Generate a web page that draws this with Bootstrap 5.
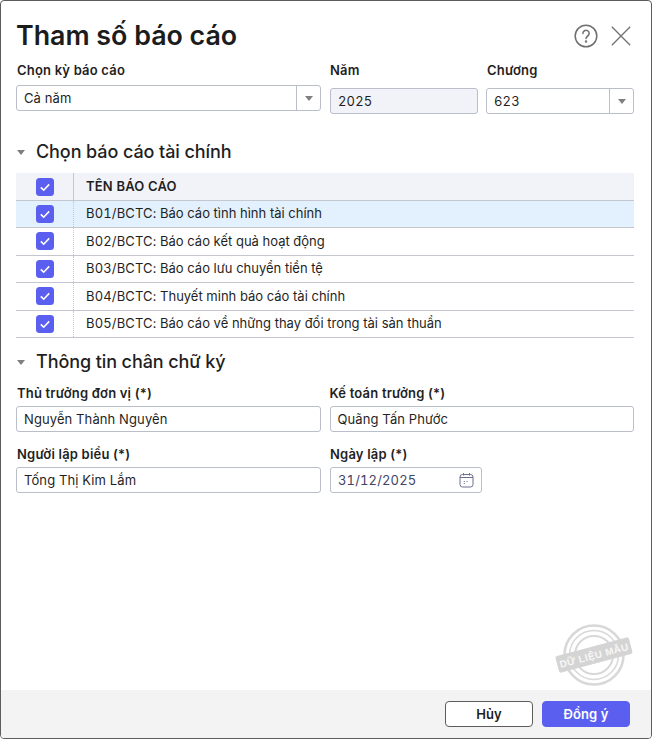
<!DOCTYPE html>
<html lang="vi">
<head>
<meta charset="utf-8">
<title>Tham số báo cáo</title>
<link href="https://cdn.jsdelivr.net/npm/bootstrap@5.3.0/dist/css/bootstrap.min.css" rel="stylesheet">
<style>
html,body{height:100%;margin:0;background:#fff}
body{font-family:Inter,"Noto Sans",sans-serif;font-size:13px;color:#1f1f1f;overflow:hidden}
.dlg{height:739px;width:652px;border:1px solid #5c5c5c;border-radius:4px;display:flex;flex-direction:column;position:relative;background:#fff}
.dlg-body{flex:1 1 auto;padding:0 17px 0 15px;min-height:0}
.dlg-head{height:60px;padding-top:1px}
.dlg-title{font-size:26.8px;font-weight:600;color:#1c1c1c;margin:0;line-height:66px}
.head-tools{margin-right:3px;margin-top:8px;gap:13px}
.ic-help{width:24px;height:24px;display:block}
.ic-close{width:20px;height:20px;display:block}
.fld-lbl{font-size:13px;font-weight:600;line-height:18px;margin:0 0 4px 1px;color:#1f1f1f;letter-spacing:.2px}
.lbl-r{margin-left:0}
.fld{height:26px;border:1px solid #babec9;border-radius:3px;font-size:13px;line-height:24px;padding:0 7px;background:#fff;display:flex;align-items:center;letter-spacing:.1px}
.fld-dis{background:#f2f3f8}
.fld-val{flex:1 1 auto}
.num{letter-spacing:.15px;font-variant-numeric:tabular-nums}
.fld-arrow{width:24px;height:24px;border-left:1px solid #babec9;margin-right:-7px;display:flex;align-items:center;justify-content:center}
.tri{width:0;height:0;border-left:4.5px solid transparent;border-right:4.5px solid transparent;border-top:5px solid #7f7f7f}
.sec-hd{font-size:18px;font-weight:500;line-height:24px;margin:0;color:#1f1f1f;display:flex;align-items:center;letter-spacing:-.09px}
.sec-hd .tri{margin:0 11px 0 1px}
.sec-1{margin-top:26px;margin-bottom:9px}
.sec-2{margin-top:12px;margin-bottom:10px}
.top-row{gap:8px}
.f-a{width:305px;margin-right:1px}
.f-a .fld-lbl{margin-bottom:6px}
.f-b{width:148px}
.f-c{width:148px}
.f-b .fld-lbl,.f-c .fld-lbl{margin-bottom:9px}
.sig-row{gap:9px;margin-bottom:13px}
.f-h{width:305px}
.f-d{width:152px}
.date-v{color:#3f4468}
.grid-hd{height:27px;background:#f2f3f8;display:flex;align-items:center}
.grid-row{height:27.5px;border-bottom:1px solid #c4c7d0;display:flex;align-items:center}
.grid-row.sel{background:#e2f1fd;border-top:1px solid #c4c7d0;height:28px}
.c-chk{width:58px;height:100%;display:flex;align-items:center;justify-content:center;border-right:1px dotted #c4c7d0;flex:none}
.grid-hd .c-chk{border-right:1px solid #c4c7d0;padding-left:1px}
.c-txt{padding-left:12px}
.grid-hd .c-txt{font-weight:600;font-size:13px;letter-spacing:.2px}
.chk{width:18px;height:18px;display:block}
.foot{height:48px;background:#f3f3f3;border-radius:0 0 3px 3px;display:flex;justify-content:flex-end;align-items:center;gap:9px;padding:0 21px 0 0;flex:none}
.btn-act{width:88px;height:26px;border-radius:4px;font-size:13px;font-weight:600;padding:0;line-height:24px;letter-spacing:.1px}
.btn-cancel{background:#fff;border:1px solid #5c5c5c;color:#1f1f1f}
.btn-ok{background:#5b5fef;border:1px solid #5b5fef;color:#fff}
.stamp{position:absolute;left:552px;top:619px;width:84px;height:70px}
.stamp-t{font-family:"Liberation Sans",sans-serif;font-size:10px;font-weight:700;fill:#f7f7f7;letter-spacing:.4px}
</style>
</head>
<body>
<div class="dlg">
  <div class="dlg-body">
    <div class="dlg-head d-flex justify-content-between">
      <h1 class="dlg-title">Tham số báo cáo</h1>
      <div class="d-flex align-items-center head-tools">
        <svg class="ic-help" viewBox="0 0 24 24" fill="none" stroke="#707070" stroke-width="1.5"><circle cx="12" cy="12" r="10.8"/><path d="M8.9 9.4a3.1 3.1 0 1 1 4.8 2.6c-1.1.7-1.7 1.3-1.7 2.6" stroke-linecap="round"/><circle cx="12" cy="17.4" r=".5" fill="#707070"/></svg>
        <svg class="ic-close" viewBox="0 0 20 20" fill="none" stroke="#707070" stroke-width="1.3"><path d="M.8.8l18.4 18.4M19.2.8L.8 19.2"/></svg>
      </div>
    </div>
    <div class="d-flex top-row">
      <div class="f-a">
        <div class="fld-lbl">Chọn kỳ báo cáo</div>
        <div class="fld"><span class="fld-val">Cả năm</span><span class="fld-arrow"><span class="tri"></span></span></div>
      </div>
      <div class="f-b">
        <div class="fld-lbl lbl-r">Năm</div>
        <div class="fld fld-dis"><span class="fld-val num">2025</span></div>
      </div>
      <div class="f-c">
        <div class="fld-lbl">Chương</div>
        <div class="fld"><span class="fld-val num">623</span><span class="fld-arrow"><span class="tri"></span></span></div>
      </div>
    </div>
    <h2 class="sec-hd sec-1"><span class="tri"></span>Chọn báo cáo tài chính</h2>
    <div class="rep-grid">
      <div class="grid-hd"><div class="c-chk"><svg class="chk" viewBox="0 0 18 18"><rect width="18" height="18" rx="3.5" fill="#5b5fef"/><path d="M4.8 9.4l2.9 2.8L13.2 6.4" fill="none" stroke="#fff" stroke-width="1.6"/></svg></div><div class="c-txt">TÊN BÁO CÁO</div></div>
      <div class="grid-row sel"><div class="c-chk"><svg class="chk" viewBox="0 0 18 18"><rect width="18" height="18" rx="3.5" fill="#5b5fef"/><path d="M4.8 9.4l2.9 2.8L13.2 6.4" fill="none" stroke="#fff" stroke-width="1.6"/></svg></div><div class="c-txt"><span class="num">B01/BCTC: </span>Báo cáo tình hình tài chính</div></div>
      <div class="grid-row"><div class="c-chk"><svg class="chk" viewBox="0 0 18 18"><rect width="18" height="18" rx="3.5" fill="#5b5fef"/><path d="M4.8 9.4l2.9 2.8L13.2 6.4" fill="none" stroke="#fff" stroke-width="1.6"/></svg></div><div class="c-txt"><span class="num">B02/BCTC: </span>Báo cáo kết quả hoạt động</div></div>
      <div class="grid-row"><div class="c-chk"><svg class="chk" viewBox="0 0 18 18"><rect width="18" height="18" rx="3.5" fill="#5b5fef"/><path d="M4.8 9.4l2.9 2.8L13.2 6.4" fill="none" stroke="#fff" stroke-width="1.6"/></svg></div><div class="c-txt"><span class="num">B03/BCTC: </span>Báo cáo lưu chuyển tiền tệ</div></div>
      <div class="grid-row"><div class="c-chk"><svg class="chk" viewBox="0 0 18 18"><rect width="18" height="18" rx="3.5" fill="#5b5fef"/><path d="M4.8 9.4l2.9 2.8L13.2 6.4" fill="none" stroke="#fff" stroke-width="1.6"/></svg></div><div class="c-txt"><span class="num">B04/BCTC: </span>Thuyết minh báo cáo tài chính</div></div>
      <div class="grid-row"><div class="c-chk"><svg class="chk" viewBox="0 0 18 18"><rect width="18" height="18" rx="3.5" fill="#5b5fef"/><path d="M4.8 9.4l2.9 2.8L13.2 6.4" fill="none" stroke="#fff" stroke-width="1.6"/></svg></div><div class="c-txt"><span class="num">B05/BCTC: </span>Báo cáo về những thay đổi trong tài sản thuần</div></div>
    </div>
    <h2 class="sec-hd sec-2"><span class="tri"></span>Thông tin chân chữ ký</h2>
    <div class="d-flex sig-row">
      <div class="f-h"><div class="fld-lbl">Thủ trưởng đơn vị (*)</div><div class="fld">Nguyễn Thành Nguyên</div></div>
      <div class="f-h"><div class="fld-lbl lbl-r">Kế toán trưởng (*)</div><div class="fld">Quãng Tấn Phước</div></div>
    </div>
    <div class="d-flex sig-row">
      <div class="f-h"><div class="fld-lbl">Người lập biểu (*)</div><div class="fld">Tống Thị Kim Lắm</div></div>
      <div class="f-d"><div class="fld-lbl lbl-r">Ngày lập (*)</div><div class="fld"><span class="fld-val date-v num">31/12/2025</span><svg width="15" height="16" viewBox="0 0 15 16" fill="none" stroke="#6b6f8c" stroke-width="1"><rect x="1" y="2.5" width="13" height="12.5" rx="2.5"/><path d="M1 5.5h13M4.5 1v2.5M10.5 1v2.5M4.8 9.5h1M4.8 11.5h1M7.5 9.5h1"/></svg></div></div>
    </div>
  </div>
  <svg class="stamp" viewBox="0 0 84 70">
    <g fill="none" stroke="#d8d8d8">
      <circle cx="41" cy="35" r="29.5" stroke-width="2.6"/>
      <circle cx="41" cy="35" r="24.5" stroke-width="1.5"/>
      <circle cx="41" cy="35" r="19" stroke-width="2"/>
    </g>
    <g transform="rotate(-15 41 35)">
      <rect x="3" y="26.5" width="76" height="17" rx="2" fill="#d4d4d4"/>
      <text class="stamp-t" x="41" y="39" text-anchor="middle">DỮ LIỆU MẪU</text>
    </g>
  </svg>
  <div class="foot">
    <button type="button" class="btn btn-act btn-cancel">Hủy</button>
    <button type="button" class="btn btn-act btn-ok">Đồng ý</button>
  </div>
</div>
</body>
</html>
